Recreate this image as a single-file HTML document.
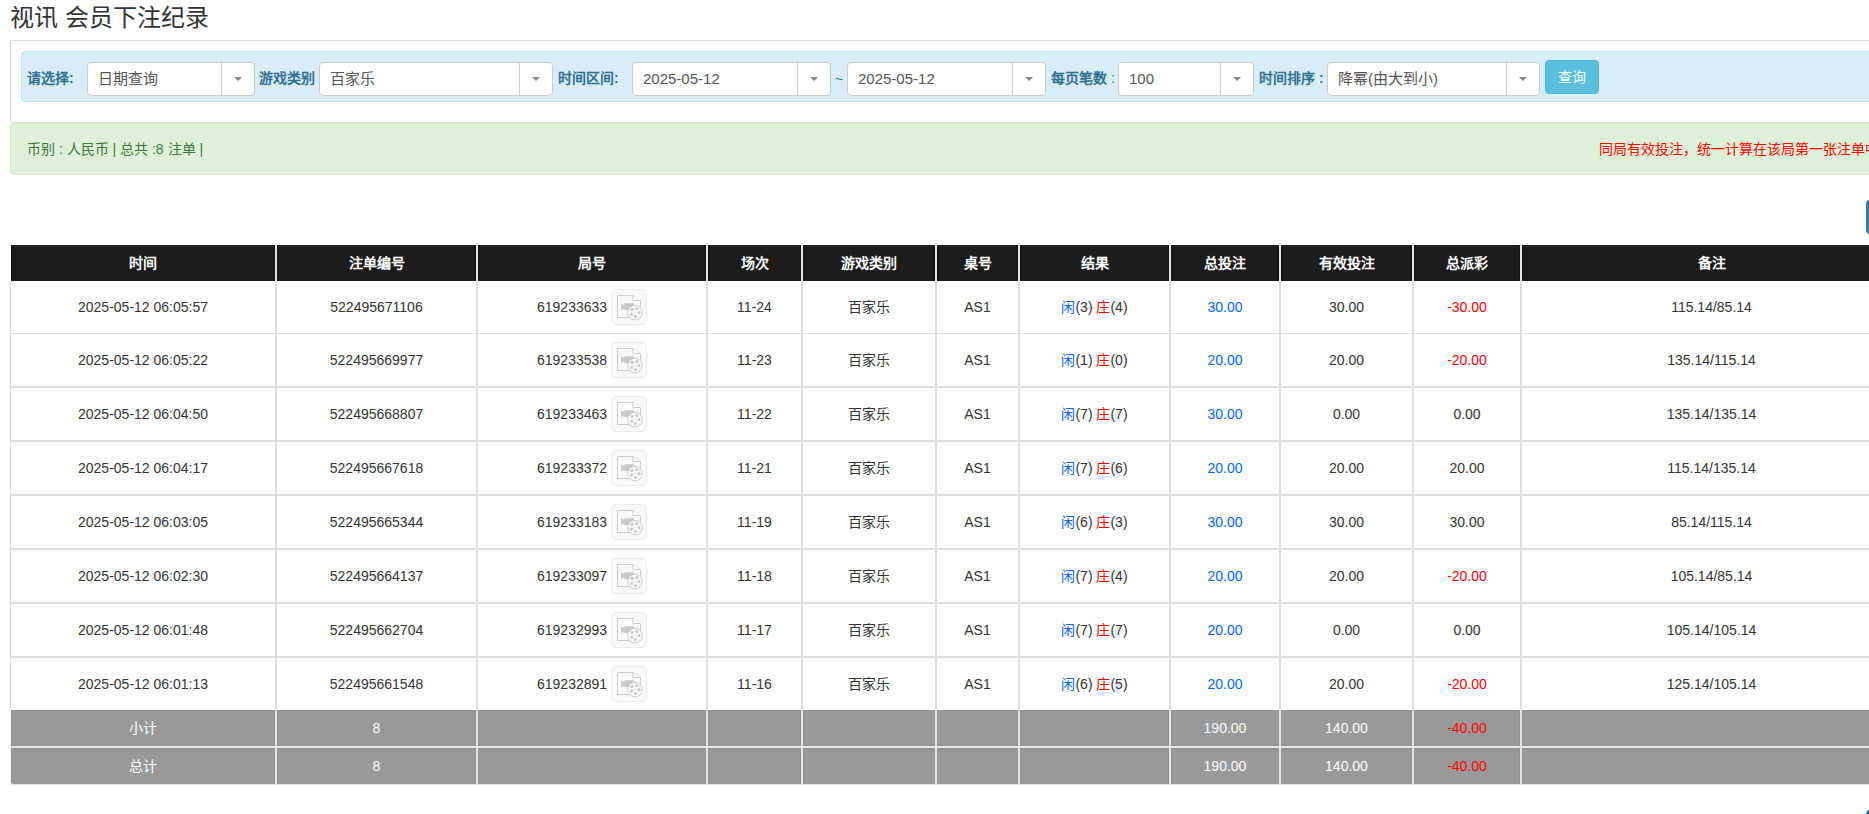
<!DOCTYPE html>
<html lang="zh-CN"><head><meta charset="utf-8"><title>视讯 会员下注纪录</title>
<style>
html,body{margin:0;padding:0;overflow:hidden;background:#fff;}
body{width:1869px;height:814px;position:relative;font-family:"Liberation Sans",sans-serif;font-size:14px;color:#333;}
#root{position:absolute;left:0;top:0;width:1869px;height:814px;overflow:hidden;}
.ttl{position:absolute;left:10px;top:2px;font-size:24px;line-height:32px;color:#333;white-space:nowrap;}
.panel{position:absolute;left:10px;top:40px;width:1950px;height:81px;border:1px solid #dddddd;background:#fff;}
.ainfo{position:absolute;left:21px;top:51px;width:1950px;height:49px;border:1px solid #bce8f1;background:#d9edf7;border-radius:4px;}
.lab{position:absolute;top:70px;line-height:16px;font-weight:bold;color:#31708f;white-space:nowrap;}
.tilde{position:absolute;left:835px;top:71px;line-height:16px;color:#31708f;}
.sel{position:absolute;top:62px;height:32px;border:1px solid #cccccc;border-radius:4px;background:#fff;box-sizing:content-box;}
.sel{width:auto}
.st{position:absolute;left:10px;top:8px;line-height:16px;font-size:15px;color:#555;white-space:nowrap;}
.dv{position:absolute;right:32px;top:0;width:1px;height:32px;background:#cccccc;}
.ar{position:absolute;right:12px;top:14px;width:0;height:0;border-left:4px solid transparent;border-right:4px solid transparent;border-top:4px solid #888;}
.btn{position:absolute;left:1545px;top:60px;width:52px;height:32px;border:1px solid #46b8da;background:#5bc0de;border-radius:4px;color:#fff;text-align:center;line-height:32px;font-size:14px;}
.asucc{position:absolute;left:10px;top:123px;width:1950px;height:50px;border:1px solid #d6e9c6;background:#dff0d8;border-radius:4px;}
.stxt{position:absolute;left:27px;top:141px;line-height:16px;color:#3c763d;white-space:nowrap;}
.rtxt{position:absolute;left:1599px;top:141px;line-height:16px;color:#ff0000;white-space:nowrap;}
.pbtn{position:absolute;left:1866px;top:200px;width:40px;height:34px;background:#337ab7;border-radius:4px;}
.pbtn2{position:absolute;left:1866px;top:810px;width:40px;height:34px;background:#337ab7;border-radius:4px;}
.tshadow{position:absolute;left:10px;top:244px;width:1900px;height:540px;box-shadow:0 0 1px rgba(0,0,0,0.15), 0 1px 1px rgba(0,0,0,0.12);border-radius:3px;}
.thbg{position:absolute;left:11px;top:245px;width:1900px;height:36px;background:#eeeeee;}
.th{position:absolute;top:245px;height:36px;line-height:36px;text-align:center;color:#fff;font-weight:bold;background:#1c1c1c;box-shadow:inset 1px 0 0 #131313, inset -1px 0 0 #131313, inset 0 1px 0 #181818, inset 0 2px 0 #252525;white-space:nowrap;}
.hsep{position:absolute;top:244px;width:2px;height:37px;background:#e6e6e6;}
.body{position:absolute;left:10px;top:281px;width:1900px;height:429px;background:#fff;}
.td{position:absolute;height:52px;display:flex;align-items:center;justify-content:center;white-space:nowrap;line-height:16px;color:#333;}
.ic{position:absolute;width:36px;height:36px;z-index:2;}
.ic svg{display:block}
.jh{display:inline-block;padding-right:39.89px;}
.b{color:#0066ff;}
.tf.r{color:#ff0000;}
.r{color:#ff0000;}
.vsep{position:absolute;top:281px;width:2px;height:429px;background:#dddddd;}
.lsep{position:absolute;left:10px;top:281px;width:1px;height:429px;background:#dddddd;}
.rsep{position:absolute;left:10px;width:1900px;height:2px;background:#dddddd;}
.tf{position:absolute;height:36px;line-height:36px;text-align:center;color:#fff;background:#999999;box-shadow:inset 1px 0 0 #8f8f8f, inset -1px 0 0 #8f8f8f, inset 0 1px 0 #8f8f8f;white-space:nowrap;}
.fbg{position:absolute;left:11px;top:710px;width:1899px;height:74px;background:#e6e6e6;border-radius:0 0 3px 3px;}
.fsep{position:absolute;top:710px;width:2px;height:74px;background:#e6e6e6;}
.fsepv{position:absolute;left:11px;width:1900px;height:2px;background:#e6e6e6;}
</style></head><body><div id="root">
<div class="ttl">视讯 会员下注纪录</div>
<div class="panel"></div>
<div class="ainfo"></div>
<div class="lab" style="left:27px">请选择:</div><div class="lab" style="left:259px">游戏类别</div><div class="lab" style="left:558px">时间区间:</div><div class="lab" style="left:1051px">每页笔数 <span style="font-weight:normal">:</span></div><div class="lab" style="left:1259px">时间排序 :</div>
<div class="tilde">~</div>
<div class="sel" style="left:87px;width:166px"><span class="st">日期查询</span><i class="dv"></i><i class="ar"></i></div><div class="sel" style="left:319px;width:232px"><span class="st">百家乐</span><i class="dv"></i><i class="ar"></i></div><div class="sel" style="left:632px;width:197px"><span class="st">2025-05-12</span><i class="dv"></i><i class="ar"></i></div><div class="sel" style="left:847px;width:197px"><span class="st">2025-05-12</span><i class="dv"></i><i class="ar"></i></div><div class="sel" style="left:1118px;width:134px"><span class="st">100</span><i class="dv"></i><i class="ar"></i></div><div class="sel" style="left:1327px;width:211px"><span class="st">降幂(由大到小)</span><i class="dv"></i><i class="ar"></i></div>
<div class="btn">查询</div>
<div class="asucc"></div>
<div class="stxt">币别 : 人民币 | 总共 :8 注单 |</div>
<div class="rtxt">同局有效投注，统一计算在该局第一张注单中</div>
<div class="pbtn"></div>
<div class="pbtn2"></div>
<div class="tshadow"></div>
<div class="thbg"></div>
<div class="body"></div>
<div class="fbg"></div>
<div class="th" style="left:11px;width:264px">时间</div>
<div class="th" style="left:277px;width:199px">注单编号</div>
<div class="th" style="left:478px;width:228px">局号</div>
<div class="th" style="left:708px;width:93px">场次</div>
<div class="th" style="left:803px;width:132px">游戏类别</div>
<div class="th" style="left:937px;width:81px">桌号</div>
<div class="th" style="left:1020px;width:149px">结果</div>
<div class="th" style="left:1171px;width:108px">总投注</div>
<div class="th" style="left:1281px;width:131px">有效投注</div>
<div class="th" style="left:1414px;width:106px">总派彩</div>
<div class="th" style="left:1522px;width:379px">备注</div>
<div class="hsep" style="left:275px"></div>
<div class="hsep" style="left:476px"></div>
<div class="hsep" style="left:706px"></div>
<div class="hsep" style="left:801px"></div>
<div class="hsep" style="left:935px"></div>
<div class="hsep" style="left:1018px"></div>
<div class="hsep" style="left:1169px"></div>
<div class="hsep" style="left:1279px"></div>
<div class="hsep" style="left:1412px"></div>
<div class="hsep" style="left:1520px"></div>
<div class="td" style="left:11px;width:264px;top:281px"><span>2025-05-12 06:05:57</span></div>
<div class="td" style="left:277px;width:199px;top:281px"><span>522495671106</span></div>
<div class="ic" style="left:611px;top:289px"><svg width="36" height="36" viewBox="0 0 36 36"><rect x="0.5" y="0.5" width="35" height="35" rx="4.5" fill="#f9f9f9" stroke="#ebebeb"/><path d="M6.5 6.5H22L29.5 12V28.5H6.5Z" fill="#fafafa" stroke="#cbcbcb"/><path d="M22 6.5V11.5H29.5" fill="#fdfdfd" stroke="#cbcbcb"/><path d="M10 14.2L13.4 16V14.2H23V21H13.4V19.4L10 21Z" fill="#c8c8c8"/><circle cx="24" cy="23.6" r="7.3" fill="#fafafa" stroke="#cbcbcb"/><g fill="#cacaca"><circle cx="21.1" cy="20.4" r="1.6"/><circle cx="25.8" cy="19.6" r="1.6"/><circle cx="28" cy="23.6" r="1.6"/><circle cx="20.6" cy="25.2" r="1.6"/><circle cx="24.5" cy="27.5" r="1.6"/><circle cx="23.9" cy="23.4" r="0.6"/></g></svg></div>
<div class="td" style="left:478px;width:228px;top:281px"><span><span class="jh">619233633</span></span></div>
<div class="td" style="left:708px;width:93px;top:281px"><span>11-24</span></div>
<div class="td" style="left:803px;width:132px;top:281px"><span>百家乐</span></div>
<div class="td" style="left:937px;width:81px;top:281px"><span>AS1</span></div>
<div class="td" style="left:1020px;width:149px;top:281px"><span><span class="b">闲</span>(3) <span class="r">庄</span>(4)</span></div>
<div class="td b" style="left:1171px;width:108px;top:281px"><span>30.00</span></div>
<div class="td" style="left:1281px;width:131px;top:281px"><span>30.00</span></div>
<div class="td r" style="left:1414px;width:106px;top:281px"><span>-30.00</span></div>
<div class="td" style="left:1522px;width:379px;top:281px"><span>115.14/85.14</span></div>
<div class="td" style="left:11px;width:264px;top:334px"><span>2025-05-12 06:05:22</span></div>
<div class="td" style="left:277px;width:199px;top:334px"><span>522495669977</span></div>
<div class="ic" style="left:611px;top:342px"><svg width="36" height="36" viewBox="0 0 36 36"><rect x="0.5" y="0.5" width="35" height="35" rx="4.5" fill="#f9f9f9" stroke="#ebebeb"/><path d="M6.5 6.5H22L29.5 12V28.5H6.5Z" fill="#fafafa" stroke="#cbcbcb"/><path d="M22 6.5V11.5H29.5" fill="#fdfdfd" stroke="#cbcbcb"/><path d="M10 14.2L13.4 16V14.2H23V21H13.4V19.4L10 21Z" fill="#c8c8c8"/><circle cx="24" cy="23.6" r="7.3" fill="#fafafa" stroke="#cbcbcb"/><g fill="#cacaca"><circle cx="21.1" cy="20.4" r="1.6"/><circle cx="25.8" cy="19.6" r="1.6"/><circle cx="28" cy="23.6" r="1.6"/><circle cx="20.6" cy="25.2" r="1.6"/><circle cx="24.5" cy="27.5" r="1.6"/><circle cx="23.9" cy="23.4" r="0.6"/></g></svg></div>
<div class="td" style="left:478px;width:228px;top:334px"><span><span class="jh">619233538</span></span></div>
<div class="td" style="left:708px;width:93px;top:334px"><span>11-23</span></div>
<div class="td" style="left:803px;width:132px;top:334px"><span>百家乐</span></div>
<div class="td" style="left:937px;width:81px;top:334px"><span>AS1</span></div>
<div class="td" style="left:1020px;width:149px;top:334px"><span><span class="b">闲</span>(1) <span class="r">庄</span>(0)</span></div>
<div class="td b" style="left:1171px;width:108px;top:334px"><span>20.00</span></div>
<div class="td" style="left:1281px;width:131px;top:334px"><span>20.00</span></div>
<div class="td r" style="left:1414px;width:106px;top:334px"><span>-20.00</span></div>
<div class="td" style="left:1522px;width:379px;top:334px"><span>135.14/115.14</span></div>
<div class="td" style="left:11px;width:264px;top:388px"><span>2025-05-12 06:04:50</span></div>
<div class="td" style="left:277px;width:199px;top:388px"><span>522495668807</span></div>
<div class="ic" style="left:611px;top:396px"><svg width="36" height="36" viewBox="0 0 36 36"><rect x="0.5" y="0.5" width="35" height="35" rx="4.5" fill="#f9f9f9" stroke="#ebebeb"/><path d="M6.5 6.5H22L29.5 12V28.5H6.5Z" fill="#fafafa" stroke="#cbcbcb"/><path d="M22 6.5V11.5H29.5" fill="#fdfdfd" stroke="#cbcbcb"/><path d="M10 14.2L13.4 16V14.2H23V21H13.4V19.4L10 21Z" fill="#c8c8c8"/><circle cx="24" cy="23.6" r="7.3" fill="#fafafa" stroke="#cbcbcb"/><g fill="#cacaca"><circle cx="21.1" cy="20.4" r="1.6"/><circle cx="25.8" cy="19.6" r="1.6"/><circle cx="28" cy="23.6" r="1.6"/><circle cx="20.6" cy="25.2" r="1.6"/><circle cx="24.5" cy="27.5" r="1.6"/><circle cx="23.9" cy="23.4" r="0.6"/></g></svg></div>
<div class="td" style="left:478px;width:228px;top:388px"><span><span class="jh">619233463</span></span></div>
<div class="td" style="left:708px;width:93px;top:388px"><span>11-22</span></div>
<div class="td" style="left:803px;width:132px;top:388px"><span>百家乐</span></div>
<div class="td" style="left:937px;width:81px;top:388px"><span>AS1</span></div>
<div class="td" style="left:1020px;width:149px;top:388px"><span><span class="b">闲</span>(7) <span class="r">庄</span>(7)</span></div>
<div class="td b" style="left:1171px;width:108px;top:388px"><span>30.00</span></div>
<div class="td" style="left:1281px;width:131px;top:388px"><span>0.00</span></div>
<div class="td" style="left:1414px;width:106px;top:388px"><span>0.00</span></div>
<div class="td" style="left:1522px;width:379px;top:388px"><span>135.14/135.14</span></div>
<div class="td" style="left:11px;width:264px;top:442px"><span>2025-05-12 06:04:17</span></div>
<div class="td" style="left:277px;width:199px;top:442px"><span>522495667618</span></div>
<div class="ic" style="left:611px;top:450px"><svg width="36" height="36" viewBox="0 0 36 36"><rect x="0.5" y="0.5" width="35" height="35" rx="4.5" fill="#f9f9f9" stroke="#ebebeb"/><path d="M6.5 6.5H22L29.5 12V28.5H6.5Z" fill="#fafafa" stroke="#cbcbcb"/><path d="M22 6.5V11.5H29.5" fill="#fdfdfd" stroke="#cbcbcb"/><path d="M10 14.2L13.4 16V14.2H23V21H13.4V19.4L10 21Z" fill="#c8c8c8"/><circle cx="24" cy="23.6" r="7.3" fill="#fafafa" stroke="#cbcbcb"/><g fill="#cacaca"><circle cx="21.1" cy="20.4" r="1.6"/><circle cx="25.8" cy="19.6" r="1.6"/><circle cx="28" cy="23.6" r="1.6"/><circle cx="20.6" cy="25.2" r="1.6"/><circle cx="24.5" cy="27.5" r="1.6"/><circle cx="23.9" cy="23.4" r="0.6"/></g></svg></div>
<div class="td" style="left:478px;width:228px;top:442px"><span><span class="jh">619233372</span></span></div>
<div class="td" style="left:708px;width:93px;top:442px"><span>11-21</span></div>
<div class="td" style="left:803px;width:132px;top:442px"><span>百家乐</span></div>
<div class="td" style="left:937px;width:81px;top:442px"><span>AS1</span></div>
<div class="td" style="left:1020px;width:149px;top:442px"><span><span class="b">闲</span>(7) <span class="r">庄</span>(6)</span></div>
<div class="td b" style="left:1171px;width:108px;top:442px"><span>20.00</span></div>
<div class="td" style="left:1281px;width:131px;top:442px"><span>20.00</span></div>
<div class="td" style="left:1414px;width:106px;top:442px"><span>20.00</span></div>
<div class="td" style="left:1522px;width:379px;top:442px"><span>115.14/135.14</span></div>
<div class="td" style="left:11px;width:264px;top:496px"><span>2025-05-12 06:03:05</span></div>
<div class="td" style="left:277px;width:199px;top:496px"><span>522495665344</span></div>
<div class="ic" style="left:611px;top:504px"><svg width="36" height="36" viewBox="0 0 36 36"><rect x="0.5" y="0.5" width="35" height="35" rx="4.5" fill="#f9f9f9" stroke="#ebebeb"/><path d="M6.5 6.5H22L29.5 12V28.5H6.5Z" fill="#fafafa" stroke="#cbcbcb"/><path d="M22 6.5V11.5H29.5" fill="#fdfdfd" stroke="#cbcbcb"/><path d="M10 14.2L13.4 16V14.2H23V21H13.4V19.4L10 21Z" fill="#c8c8c8"/><circle cx="24" cy="23.6" r="7.3" fill="#fafafa" stroke="#cbcbcb"/><g fill="#cacaca"><circle cx="21.1" cy="20.4" r="1.6"/><circle cx="25.8" cy="19.6" r="1.6"/><circle cx="28" cy="23.6" r="1.6"/><circle cx="20.6" cy="25.2" r="1.6"/><circle cx="24.5" cy="27.5" r="1.6"/><circle cx="23.9" cy="23.4" r="0.6"/></g></svg></div>
<div class="td" style="left:478px;width:228px;top:496px"><span><span class="jh">619233183</span></span></div>
<div class="td" style="left:708px;width:93px;top:496px"><span>11-19</span></div>
<div class="td" style="left:803px;width:132px;top:496px"><span>百家乐</span></div>
<div class="td" style="left:937px;width:81px;top:496px"><span>AS1</span></div>
<div class="td" style="left:1020px;width:149px;top:496px"><span><span class="b">闲</span>(6) <span class="r">庄</span>(3)</span></div>
<div class="td b" style="left:1171px;width:108px;top:496px"><span>30.00</span></div>
<div class="td" style="left:1281px;width:131px;top:496px"><span>30.00</span></div>
<div class="td" style="left:1414px;width:106px;top:496px"><span>30.00</span></div>
<div class="td" style="left:1522px;width:379px;top:496px"><span>85.14/115.14</span></div>
<div class="td" style="left:11px;width:264px;top:550px"><span>2025-05-12 06:02:30</span></div>
<div class="td" style="left:277px;width:199px;top:550px"><span>522495664137</span></div>
<div class="ic" style="left:611px;top:558px"><svg width="36" height="36" viewBox="0 0 36 36"><rect x="0.5" y="0.5" width="35" height="35" rx="4.5" fill="#f9f9f9" stroke="#ebebeb"/><path d="M6.5 6.5H22L29.5 12V28.5H6.5Z" fill="#fafafa" stroke="#cbcbcb"/><path d="M22 6.5V11.5H29.5" fill="#fdfdfd" stroke="#cbcbcb"/><path d="M10 14.2L13.4 16V14.2H23V21H13.4V19.4L10 21Z" fill="#c8c8c8"/><circle cx="24" cy="23.6" r="7.3" fill="#fafafa" stroke="#cbcbcb"/><g fill="#cacaca"><circle cx="21.1" cy="20.4" r="1.6"/><circle cx="25.8" cy="19.6" r="1.6"/><circle cx="28" cy="23.6" r="1.6"/><circle cx="20.6" cy="25.2" r="1.6"/><circle cx="24.5" cy="27.5" r="1.6"/><circle cx="23.9" cy="23.4" r="0.6"/></g></svg></div>
<div class="td" style="left:478px;width:228px;top:550px"><span><span class="jh">619233097</span></span></div>
<div class="td" style="left:708px;width:93px;top:550px"><span>11-18</span></div>
<div class="td" style="left:803px;width:132px;top:550px"><span>百家乐</span></div>
<div class="td" style="left:937px;width:81px;top:550px"><span>AS1</span></div>
<div class="td" style="left:1020px;width:149px;top:550px"><span><span class="b">闲</span>(7) <span class="r">庄</span>(4)</span></div>
<div class="td b" style="left:1171px;width:108px;top:550px"><span>20.00</span></div>
<div class="td" style="left:1281px;width:131px;top:550px"><span>20.00</span></div>
<div class="td r" style="left:1414px;width:106px;top:550px"><span>-20.00</span></div>
<div class="td" style="left:1522px;width:379px;top:550px"><span>105.14/85.14</span></div>
<div class="td" style="left:11px;width:264px;top:604px"><span>2025-05-12 06:01:48</span></div>
<div class="td" style="left:277px;width:199px;top:604px"><span>522495662704</span></div>
<div class="ic" style="left:611px;top:612px"><svg width="36" height="36" viewBox="0 0 36 36"><rect x="0.5" y="0.5" width="35" height="35" rx="4.5" fill="#f9f9f9" stroke="#ebebeb"/><path d="M6.5 6.5H22L29.5 12V28.5H6.5Z" fill="#fafafa" stroke="#cbcbcb"/><path d="M22 6.5V11.5H29.5" fill="#fdfdfd" stroke="#cbcbcb"/><path d="M10 14.2L13.4 16V14.2H23V21H13.4V19.4L10 21Z" fill="#c8c8c8"/><circle cx="24" cy="23.6" r="7.3" fill="#fafafa" stroke="#cbcbcb"/><g fill="#cacaca"><circle cx="21.1" cy="20.4" r="1.6"/><circle cx="25.8" cy="19.6" r="1.6"/><circle cx="28" cy="23.6" r="1.6"/><circle cx="20.6" cy="25.2" r="1.6"/><circle cx="24.5" cy="27.5" r="1.6"/><circle cx="23.9" cy="23.4" r="0.6"/></g></svg></div>
<div class="td" style="left:478px;width:228px;top:604px"><span><span class="jh">619232993</span></span></div>
<div class="td" style="left:708px;width:93px;top:604px"><span>11-17</span></div>
<div class="td" style="left:803px;width:132px;top:604px"><span>百家乐</span></div>
<div class="td" style="left:937px;width:81px;top:604px"><span>AS1</span></div>
<div class="td" style="left:1020px;width:149px;top:604px"><span><span class="b">闲</span>(7) <span class="r">庄</span>(7)</span></div>
<div class="td b" style="left:1171px;width:108px;top:604px"><span>20.00</span></div>
<div class="td" style="left:1281px;width:131px;top:604px"><span>0.00</span></div>
<div class="td" style="left:1414px;width:106px;top:604px"><span>0.00</span></div>
<div class="td" style="left:1522px;width:379px;top:604px"><span>105.14/105.14</span></div>
<div class="td" style="left:11px;width:264px;top:658px"><span>2025-05-12 06:01:13</span></div>
<div class="td" style="left:277px;width:199px;top:658px"><span>522495661548</span></div>
<div class="ic" style="left:611px;top:666px"><svg width="36" height="36" viewBox="0 0 36 36"><rect x="0.5" y="0.5" width="35" height="35" rx="4.5" fill="#f9f9f9" stroke="#ebebeb"/><path d="M6.5 6.5H22L29.5 12V28.5H6.5Z" fill="#fafafa" stroke="#cbcbcb"/><path d="M22 6.5V11.5H29.5" fill="#fdfdfd" stroke="#cbcbcb"/><path d="M10 14.2L13.4 16V14.2H23V21H13.4V19.4L10 21Z" fill="#c8c8c8"/><circle cx="24" cy="23.6" r="7.3" fill="#fafafa" stroke="#cbcbcb"/><g fill="#cacaca"><circle cx="21.1" cy="20.4" r="1.6"/><circle cx="25.8" cy="19.6" r="1.6"/><circle cx="28" cy="23.6" r="1.6"/><circle cx="20.6" cy="25.2" r="1.6"/><circle cx="24.5" cy="27.5" r="1.6"/><circle cx="23.9" cy="23.4" r="0.6"/></g></svg></div>
<div class="td" style="left:478px;width:228px;top:658px"><span><span class="jh">619232891</span></span></div>
<div class="td" style="left:708px;width:93px;top:658px"><span>11-16</span></div>
<div class="td" style="left:803px;width:132px;top:658px"><span>百家乐</span></div>
<div class="td" style="left:937px;width:81px;top:658px"><span>AS1</span></div>
<div class="td" style="left:1020px;width:149px;top:658px"><span><span class="b">闲</span>(6) <span class="r">庄</span>(5)</span></div>
<div class="td b" style="left:1171px;width:108px;top:658px"><span>20.00</span></div>
<div class="td" style="left:1281px;width:131px;top:658px"><span>20.00</span></div>
<div class="td r" style="left:1414px;width:106px;top:658px"><span>-20.00</span></div>
<div class="td" style="left:1522px;width:379px;top:658px"><span>125.14/105.14</span></div>
<div class="vsep" style="left:275px"></div>
<div class="vsep" style="left:476px"></div>
<div class="vsep" style="left:706px"></div>
<div class="vsep" style="left:801px"></div>
<div class="vsep" style="left:935px"></div>
<div class="vsep" style="left:1018px"></div>
<div class="vsep" style="left:1169px"></div>
<div class="vsep" style="left:1279px"></div>
<div class="vsep" style="left:1412px"></div>
<div class="vsep" style="left:1520px"></div>
<div class="lsep"></div>
<div class="rsep" style="top:333px;height:1px"></div>
<div class="rsep" style="top:386px"></div>
<div class="rsep" style="top:440px"></div>
<div class="rsep" style="top:494px"></div>
<div class="rsep" style="top:548px"></div>
<div class="rsep" style="top:602px"></div>
<div class="rsep" style="top:656px"></div>
<div class="tf" style="left:11px;width:264px;top:710px">小计</div>
<div class="tf" style="left:277px;width:199px;top:710px">8</div>
<div class="tf" style="left:478px;width:228px;top:710px"></div>
<div class="tf" style="left:708px;width:93px;top:710px"></div>
<div class="tf" style="left:803px;width:132px;top:710px"></div>
<div class="tf" style="left:937px;width:81px;top:710px"></div>
<div class="tf" style="left:1020px;width:149px;top:710px"></div>
<div class="tf" style="left:1171px;width:108px;top:710px">190.00</div>
<div class="tf" style="left:1281px;width:131px;top:710px">140.00</div>
<div class="tf r" style="left:1414px;width:106px;top:710px">-40.00</div>
<div class="tf" style="left:1522px;width:379px;top:710px"></div>
<div class="tf" style="left:11px;width:264px;top:748px;border-bottom-left-radius:3px">总计</div>
<div class="tf" style="left:277px;width:199px;top:748px">8</div>
<div class="tf" style="left:478px;width:228px;top:748px"></div>
<div class="tf" style="left:708px;width:93px;top:748px"></div>
<div class="tf" style="left:803px;width:132px;top:748px"></div>
<div class="tf" style="left:937px;width:81px;top:748px"></div>
<div class="tf" style="left:1020px;width:149px;top:748px"></div>
<div class="tf" style="left:1171px;width:108px;top:748px">190.00</div>
<div class="tf" style="left:1281px;width:131px;top:748px">140.00</div>
<div class="tf r" style="left:1414px;width:106px;top:748px">-40.00</div>
<div class="tf" style="left:1522px;width:379px;top:748px"></div>
<div class="fsepv" style="top:746px"></div>
<div class="fsep" style="left:275px"></div>
<div class="fsep" style="left:476px"></div>
<div class="fsep" style="left:706px"></div>
<div class="fsep" style="left:801px"></div>
<div class="fsep" style="left:935px"></div>
<div class="fsep" style="left:1018px"></div>
<div class="fsep" style="left:1169px"></div>
<div class="fsep" style="left:1279px"></div>
<div class="fsep" style="left:1412px"></div>
<div class="fsep" style="left:1520px"></div>
</div></body></html>
